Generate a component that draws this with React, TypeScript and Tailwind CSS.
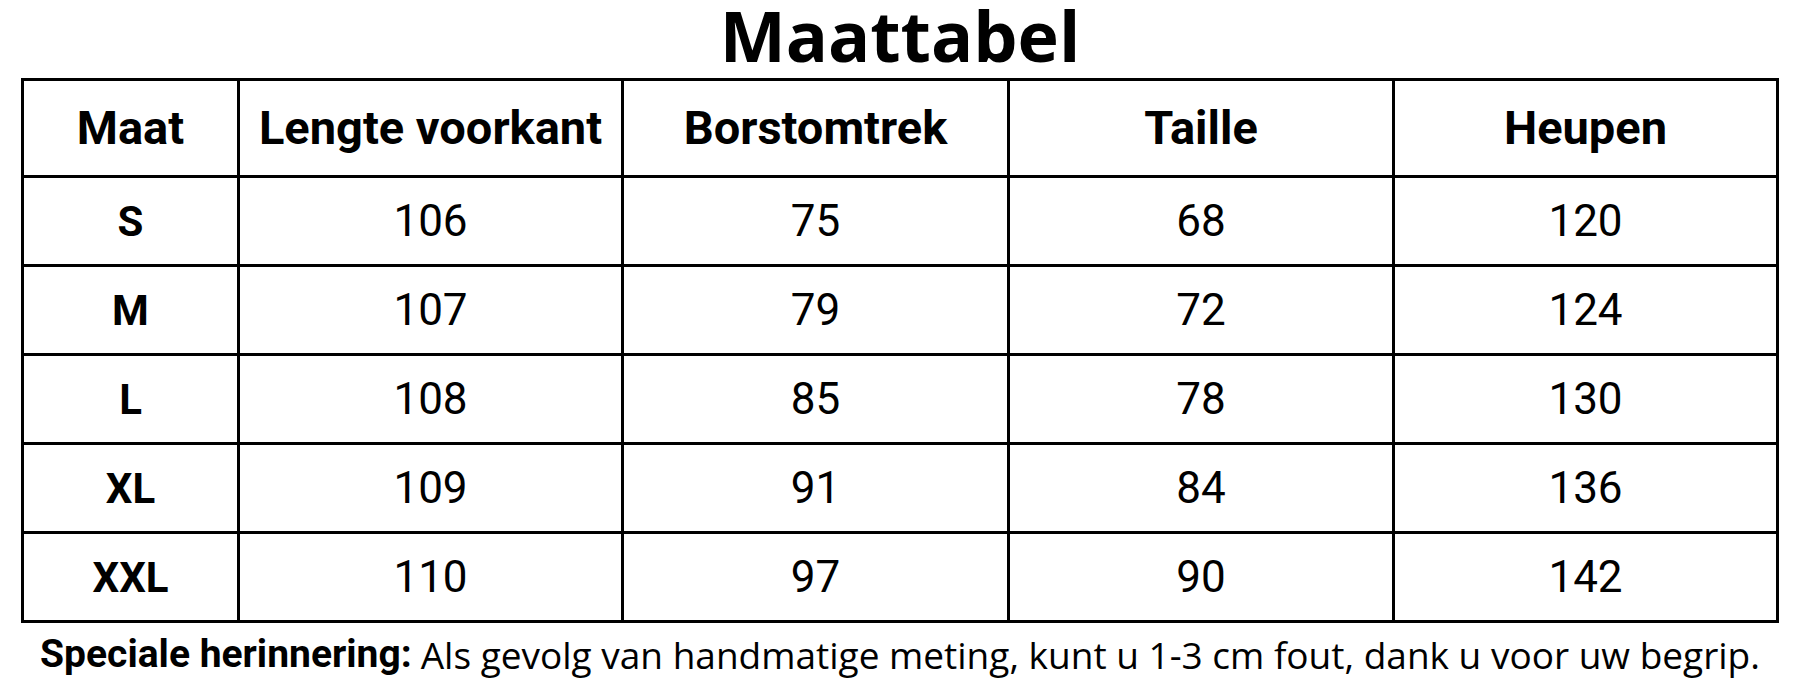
import React from "react";

const rows = [
  ["S", "106", "75", "68", "120"],
  ["M", "107", "79", "72", "124"],
  ["L", "108", "85", "78", "130"],
  ["XL", "109", "91", "84", "136"],
  ["XXL", "110", "97", "90", "142"],
];

const headers = ["Maat", "Lengte voorkant", "Borstomtrek", "Taille", "Heupen"];

export default function App() {
  return (
    <div className="w-[1800px] h-[683px] bg-white text-black overflow-hidden">
      <h1 className="h-[78px] text-center font-['Open_Sans',sans-serif] font-bold text-[70px] leading-none">
        Maattabel
      </h1>

      <div className="mx-[21px] grid grid-cols-[213px_381px_383px_382px_381px] grid-rows-[94px_repeat(5,86px)] gap-[3px] bg-black p-[3px] font-['Roboto',sans-serif]">
        {headers.map((h) => (
          <div
            key={h}
            className="bg-white flex items-center justify-center font-bold text-[47px]"
          >
            {h}
          </div>
        ))}
        {rows.map((r) =>
          r.map((cell, i) => (
            <div
              key={r[0] + i}
              className={
                i === 0
                  ? "bg-white flex items-center justify-center font-bold text-[42px]"
                  : "bg-white flex items-center justify-center text-[44px]"
              }
            >
              {cell}
            </div>
          ))
        )}
      </div>

      <p className="h-[60px] flex items-center justify-center pt-[2px] text-[37px] leading-none font-['Open_Sans',sans-serif] whitespace-nowrap">
        <span className="font-bold font-['Roboto',sans-serif] text-[39px] mr-[9px]">Speciale herinnering:</span>
        Als gevolg van handmatige meting, kunt u 1-3 cm fout, dank u voor uw begrip.
      </p>
    </div>
  );
}
